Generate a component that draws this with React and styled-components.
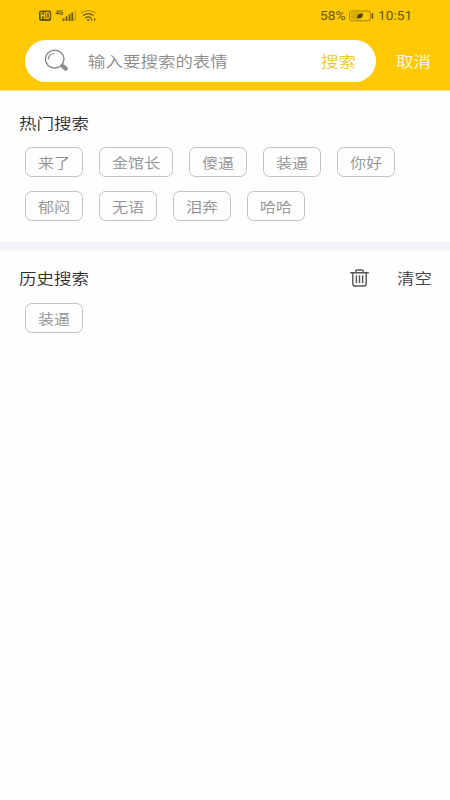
import React from "react";
import styled, { createGlobalStyle } from "styled-components";

const GlobalStyle = createGlobalStyle`
  * { box-sizing: border-box; }
  body {
    margin: 0;
    background: #fefefe;
    font-family: "Noto Sans CJK SC", sans-serif;
    font-weight: 350;
  }
`;

const Screen = styled.div`
  width: 450px;
  height: 800px;
  overflow: hidden;
  background: #fefefe;
`;

const Header = styled.header`
  height: 91px;
  background: #fdc905;
  border-bottom: 1px solid #fee180;
`;

const StatusBar = styled.div`
  height: 32px;
  padding: 0 38px 0 39px;
  display: flex;
  justify-content: space-between;
  color: #6b560d;
`;

const StatusGroup = styled.div`
  display: flex;
  height: 32px;
  align-items: center;
`;

const StatusText = styled.span`
  width: ${(p) => p.$width}px;
  font: 12.5px/32px Roboto, sans-serif;
  white-space: nowrap;
`;

const StatusWords = styled.span`
  display: inline-block;
  transform: scaleX(${(p) => p.$stretch});
  transform-origin: left center;
`;

const SearchRow = styled.div`
  display: flex;
  align-items: center;
  height: 42px;
  margin: 7.5px 0 0 25px;
`;

const SearchField = styled.div`
  display: flex;
  align-items: center;
  width: 351px;
  height: 42px;
  padding: 0 20px 0 19px;
  border-radius: 21px;
  background: #fff;
`;

const Label = styled.span`
  display: block;
  flex: none;
  width: ${(p) => p.$chars * (p.$small ? 16.1 : 17.5)}px;
  color: ${(p) => p.$color};
  font-size: ${(p) => (p.$small ? 13.8 : 15)}px;
  line-height: 24px;
  white-space: nowrap;
`;

const Words = styled.span`
  display: inline-block;
  transform: scaleX(1.165);
  transform-origin: left center;
`;

const Placeholder = styled.div`
  flex: 1;
  margin-left: 19px;
`;

const Cancel = styled.div`
  margin-left: 20px;
`;

const Section = styled.section`
  height: ${(p) => p.$height}px;
  padding: ${(p) => p.$top}px 18px 0 19px;
`;

const SectionHead = styled.div`
  display: flex;
  align-items: center;
  height: 24px;
`;

const Actions = styled.div`
  display: flex;
  align-items: center;
  gap: 28px;
  margin-left: auto;
`;

const Tags = styled.div`
  display: flex;
  flex-wrap: wrap;
  gap: 14px 16px;
  padding: ${(p) => p.$top}px 0 0 6px;
`;

const Tag = styled.div`
  display: flex;
  align-items: center;
  width: ${(p) => (p.$chars === 3 ? 74 : 58)}px;
  height: 30px;
  padding: 0 0 1px 12px;
  border: 1px solid #c2c2c2;
  border-radius: 6.5px;
`;

const Divider = styled.div`
  height: 9px;
  background: #f2f4fa;
`;

const Text = ({ children, color, small }) => (
  <Label $chars={children.length} $color={color} $small={small}>
    <Words>{children}</Words>
  </Label>
);

const TagList = ({ items, top }) => (
  <Tags $top={top}>
    {items.map((t) => (
      <Tag key={t} $chars={t.length}>
        <Text small color="#909090">{t}</Text>
      </Tag>
    ))}
  </Tags>
);

const SignalIcons = () => (
  <svg width="60" height="18" viewBox="0 0 60 18" fill="none">
    <rect x="0" y="3.6" width="12.2" height="10.4" rx="2" fill="#6b560d" />
    <text x="1.2" y="11.8" fontFamily="Roboto" fontSize="8.2" fontWeight="700" fill="#fdc905" textLength="10" lengthAdjust="spacingAndGlyphs">HD</text>
    <text x="16.5" y="7.8" fontFamily="Roboto" fontSize="7" fontWeight="700" fill="#6b560d" textLength="7.5" lengthAdjust="spacingAndGlyphs">4G</text>
    <path d="M24.5 14v-2.5M27.5 14v-4.5M30.5 14V7.5M33.3 14V5.5" stroke="#6b560d" strokeWidth="1.8" />
    <path d="M36.3 14V3.5" stroke="#c19b0a" strokeWidth="1.2" />
    <path d="M42 6.1c4.2-3.2 10.2-3.2 14.4 0" stroke="#b58f0b" strokeWidth="1.2" />
    <path d="M44 8.6c3.1-2.4 7.3-2.4 10.4 0M46.2 11.1c1.8-1.5 4.2-1.5 6 0" stroke="#6b560d" strokeWidth="1.3" />
    <circle cx="49.2" cy="13" r="1.1" fill="#6b560d" />
    <path d="m53.2 11-1.7 1.6 1.7 1.6zM55 11l1.7 1.6-1.7 1.6z" fill="#6b560d" />
  </svg>
);

const BatteryIcon = () => (
  <svg width="29" height="12" viewBox="0 0 29 12">
    <rect x="0.6" y="1" width="20.8" height="9.8" rx="2" fill="none" stroke="#a5850b" />
    <rect x="2" y="2.4" width="10" height="7" fill="#d4a90a" />
    <path d="M8.2 8C8 5 10 3.5 14 3.3c.1 3.9-1.8 5.6-4.6 4.7l-1.1 1z" fill="#4f400d" />
    <path d="M23.4 3.2v5.4" stroke="#6b560d" strokeWidth="1.6" />
  </svg>
);

const SearchIcon = () => (
  <svg width="25" height="24" viewBox="0 0 25 24" fill="none" stroke="#898989">
    <ellipse cx="10.7" cy="10.1" rx="9.3" ry="8.9" strokeWidth="1.4" />
    <path d="M4.4 9.9c.4-3 2.5-5 5.5-5.4" strokeWidth="1.2" strokeLinecap="round" />
    <path d="m17 15.8 2.1 1.8" strokeWidth="2" />
    <path d="m19.1 17.4 2.7 2.2" strokeWidth="4.2" strokeLinecap="round" />
  </svg>
);

const TrashIcon = () => (
  <svg width="19" height="18" viewBox="0 0 19 18" fill="none" stroke="#555" strokeWidth="1.4">
    <path d="M.2 3.7h18.6M5.8 3.5V2.1Q5.8 1 7 1h5q1.2 0 1.2 1.1v1.4M2.8 3.8v11q0 2.2 2.2 2.2h9q2.2 0 2.2-2.2v-11" />
    <path d="M6.4 6.3v7.6M9.5 6.3v7.6M12.6 6.3v7.6" />
  </svg>
);

export default function App() {
  return (
    <Screen>
      <GlobalStyle />
      <Header>
        <StatusBar>
          <StatusGroup><SignalIcons /></StatusGroup>
          <StatusGroup>
            <StatusText $width={29}><StatusWords $stretch={1.1}>58%</StatusWords></StatusText>
            <BatteryIcon />
            <StatusText $width={34}><StatusWords $stretch={1.1}>10:51</StatusWords></StatusText>
          </StatusGroup>
        </StatusBar>
        <SearchRow>
          <SearchField>
            <SearchIcon />
            <Placeholder><Text color="#8b8b8b">输入要搜索的表情</Text></Placeholder>
            <Text color="#efc32a">搜索</Text>
          </SearchField>
          <Cancel><Text color="#fffbe9">取消</Text></Cancel>
        </SearchRow>
      </Header>
      <Section $height={151} $top={20}>
        <SectionHead><Text color="#2b2b2b">热门搜索</Text></SectionHead>
        <TagList top={12} items={["来了", "金馆长", "傻逼", "装逼", "你好", "郁闷", "无语", "泪奔", "哈哈"]} />
      </Section>
      <Divider />
      <Section $height={549} $top={15}>
        <SectionHead>
          <Text color="#2b2b2b">历史搜索</Text>
          <Actions>
            <TrashIcon />
            <Text color="#444">清空</Text>
          </Actions>
        </SectionHead>
        <TagList top={13} items={["装逼"]} />
      </Section>
    </Screen>
  );
}
